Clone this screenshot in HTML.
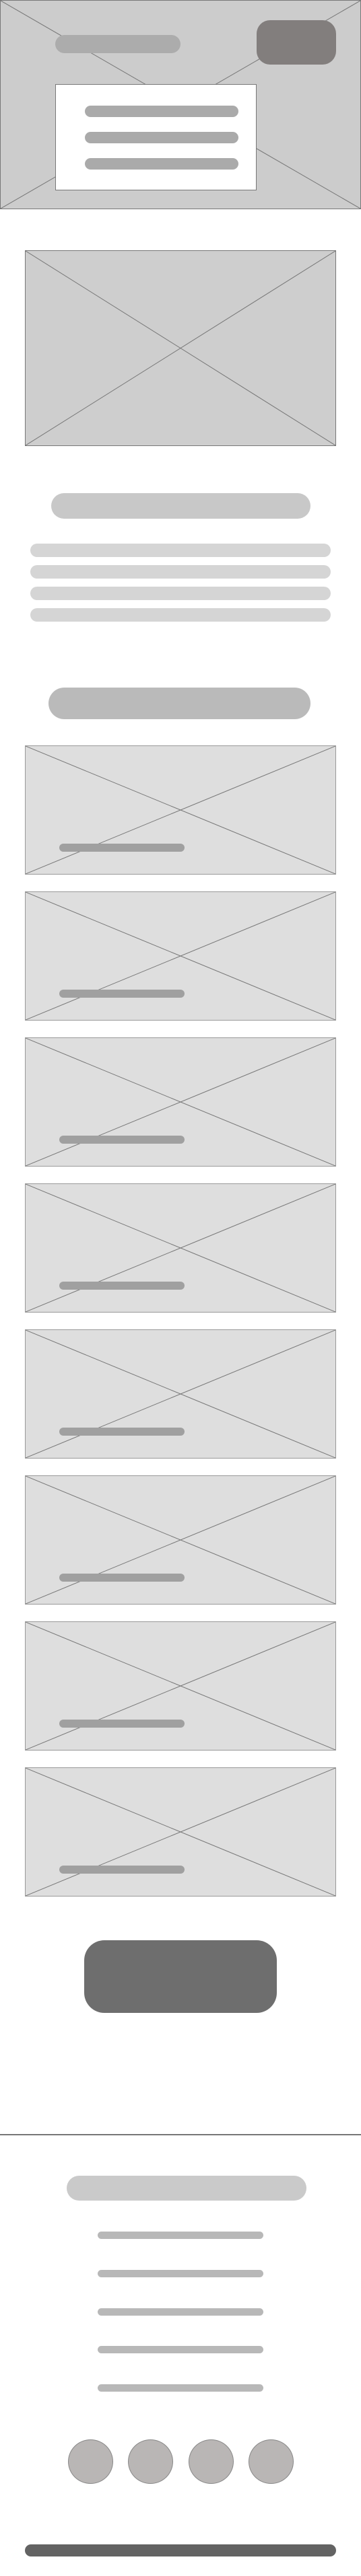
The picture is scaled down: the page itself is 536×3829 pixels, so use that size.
<!DOCTYPE html>
<html><head><meta charset="utf-8"><style>
*{margin:0;padding:0;box-sizing:border-box}
html,body{width:536px;height:3829px;background:#fff;position:relative;overflow:hidden}
.a{position:absolute}
.ph{position:absolute;border:1px solid #888}
.ph svg{position:absolute;left:0;top:0;width:100%;height:100%}
.pill{position:absolute;border-radius:999px}
</style></head><body>

<div class="ph" style="left:0;top:0;width:536px;height:311px;background:#cccccc;border-color:#777">
<svg viewBox="0 0 100 100" preserveAspectRatio="none"><line x1="0" y1="0" x2="100" y2="100" stroke="#777" stroke-width="1" vector-effect="non-scaling-stroke"/><line x1="100" y1="0" x2="0" y2="100" stroke="#777" stroke-width="1" vector-effect="non-scaling-stroke"/></svg>
</div>
<div class="pill" style="left:82px;top:52px;width:186px;height:27px;background:#acacac"></div>
<div class="a" style="left:381px;top:30px;width:118px;height:66px;background:#827e7d;border-radius:20px"></div>
<div class="a" style="left:82px;top:125px;width:299px;height:158px;background:#fff;border:1px solid #777"></div>
<div class="pill" style="left:126px;top:157px;width:228px;height:17px;background:#aaa"></div>
<div class="pill" style="left:126px;top:196px;width:228px;height:17px;background:#aaa"></div>
<div class="pill" style="left:126px;top:235px;width:228px;height:17px;background:#aaa"></div>

<div class="ph" style="left:37px;top:372px;width:462px;height:291px;background:#cecece;border-color:#777">
<svg viewBox="0 0 100 100" preserveAspectRatio="none"><line x1="0" y1="0" x2="100" y2="100" stroke="#777" vector-effect="non-scaling-stroke"/><line x1="100" y1="0" x2="0" y2="100" stroke="#777" vector-effect="non-scaling-stroke"/></svg>
</div>

<div class="pill" style="left:76px;top:733px;width:385px;height:38px;background:#c8c8c8"></div>
<div class="pill" style="left:45px;top:808px;width:446px;height:20px;background:#d5d5d5"></div>
<div class="pill" style="left:45px;top:840px;width:446px;height:20px;background:#d5d5d5"></div>
<div class="pill" style="left:45px;top:872px;width:446px;height:20px;background:#d5d5d5"></div>
<div class="pill" style="left:45px;top:904px;width:446px;height:20px;background:#d5d5d5"></div>

<div class="pill" style="left:72px;top:1022px;width:389px;height:47px;background:#bababa"></div>

<div class="ph" style="left:37px;top:1108px;width:462px;height:192px;background:#dedede;border-color:#999"><svg viewBox="0 0 100 100" preserveAspectRatio="none"><line x1="0" y1="0" x2="100" y2="100" stroke="#777" vector-effect="non-scaling-stroke"/><line x1="100" y1="0" x2="0" y2="100" stroke="#777" vector-effect="non-scaling-stroke"/></svg><div class="pill" style="left:50px;top:145px;width:186px;height:12px;background:#a0a0a0"></div></div>
<div class="ph" style="left:37px;top:1325px;width:462px;height:192px;background:#dedede;border-color:#999"><svg viewBox="0 0 100 100" preserveAspectRatio="none"><line x1="0" y1="0" x2="100" y2="100" stroke="#777" vector-effect="non-scaling-stroke"/><line x1="100" y1="0" x2="0" y2="100" stroke="#777" vector-effect="non-scaling-stroke"/></svg><div class="pill" style="left:50px;top:145px;width:186px;height:12px;background:#a0a0a0"></div></div>
<div class="ph" style="left:37px;top:1542px;width:462px;height:192px;background:#dedede;border-color:#999"><svg viewBox="0 0 100 100" preserveAspectRatio="none"><line x1="0" y1="0" x2="100" y2="100" stroke="#777" vector-effect="non-scaling-stroke"/><line x1="100" y1="0" x2="0" y2="100" stroke="#777" vector-effect="non-scaling-stroke"/></svg><div class="pill" style="left:50px;top:145px;width:186px;height:12px;background:#a0a0a0"></div></div>
<div class="ph" style="left:37px;top:1759px;width:462px;height:192px;background:#dedede;border-color:#999"><svg viewBox="0 0 100 100" preserveAspectRatio="none"><line x1="0" y1="0" x2="100" y2="100" stroke="#777" vector-effect="non-scaling-stroke"/><line x1="100" y1="0" x2="0" y2="100" stroke="#777" vector-effect="non-scaling-stroke"/></svg><div class="pill" style="left:50px;top:145px;width:186px;height:12px;background:#a0a0a0"></div></div>
<div class="ph" style="left:37px;top:1976px;width:462px;height:192px;background:#dedede;border-color:#999"><svg viewBox="0 0 100 100" preserveAspectRatio="none"><line x1="0" y1="0" x2="100" y2="100" stroke="#777" vector-effect="non-scaling-stroke"/><line x1="100" y1="0" x2="0" y2="100" stroke="#777" vector-effect="non-scaling-stroke"/></svg><div class="pill" style="left:50px;top:145px;width:186px;height:12px;background:#a0a0a0"></div></div>
<div class="ph" style="left:37px;top:2193px;width:462px;height:192px;background:#dedede;border-color:#999"><svg viewBox="0 0 100 100" preserveAspectRatio="none"><line x1="0" y1="0" x2="100" y2="100" stroke="#777" vector-effect="non-scaling-stroke"/><line x1="100" y1="0" x2="0" y2="100" stroke="#777" vector-effect="non-scaling-stroke"/></svg><div class="pill" style="left:50px;top:145px;width:186px;height:12px;background:#a0a0a0"></div></div>
<div class="ph" style="left:37px;top:2410px;width:462px;height:192px;background:#dedede;border-color:#999"><svg viewBox="0 0 100 100" preserveAspectRatio="none"><line x1="0" y1="0" x2="100" y2="100" stroke="#777" vector-effect="non-scaling-stroke"/><line x1="100" y1="0" x2="0" y2="100" stroke="#777" vector-effect="non-scaling-stroke"/></svg><div class="pill" style="left:50px;top:145px;width:186px;height:12px;background:#a0a0a0"></div></div>
<div class="ph" style="left:37px;top:2627px;width:462px;height:192px;background:#dedede;border-color:#999"><svg viewBox="0 0 100 100" preserveAspectRatio="none"><line x1="0" y1="0" x2="100" y2="100" stroke="#777" vector-effect="non-scaling-stroke"/><line x1="100" y1="0" x2="0" y2="100" stroke="#777" vector-effect="non-scaling-stroke"/></svg><div class="pill" style="left:50px;top:145px;width:186px;height:12px;background:#a0a0a0"></div></div>

<div class="a" style="left:125px;top:2884px;width:286px;height:108px;background:#6e6e6e;border-radius:30px"></div>

<div class="a" style="left:0;top:3172px;width:536px;height:2px;background:#777"></div>

<div class="pill" style="left:99px;top:3234px;width:356px;height:37px;background:#cacaca"></div>
<div class="pill" style="left:145px;top:3317px;width:246px;height:11px;background:#b8b8b8"></div>
<div class="pill" style="left:145px;top:3374px;width:246px;height:11px;background:#b8b8b8"></div>
<div class="pill" style="left:145px;top:3431px;width:246px;height:11px;background:#b8b8b8"></div>
<div class="pill" style="left:145px;top:3487px;width:246px;height:11px;background:#b8b8b8"></div>
<div class="pill" style="left:145px;top:3544px;width:246px;height:11px;background:#b8b8b8"></div>

<div class="a" style="left:101px;top:3626px;width:67px;height:66px;border-radius:50%;background:#b9b6b5;border:1px solid #888"></div>
<div class="a" style="left:190px;top:3626px;width:67px;height:66px;border-radius:50%;background:#b9b6b5;border:1px solid #888"></div>
<div class="a" style="left:280px;top:3626px;width:67px;height:66px;border-radius:50%;background:#b9b6b5;border:1px solid #888"></div>
<div class="a" style="left:369px;top:3626px;width:67px;height:66px;border-radius:50%;background:#b9b6b5;border:1px solid #888"></div>

<div class="pill" style="left:37px;top:3782px;width:462px;height:18px;background:#636363"></div>
</body></html>
